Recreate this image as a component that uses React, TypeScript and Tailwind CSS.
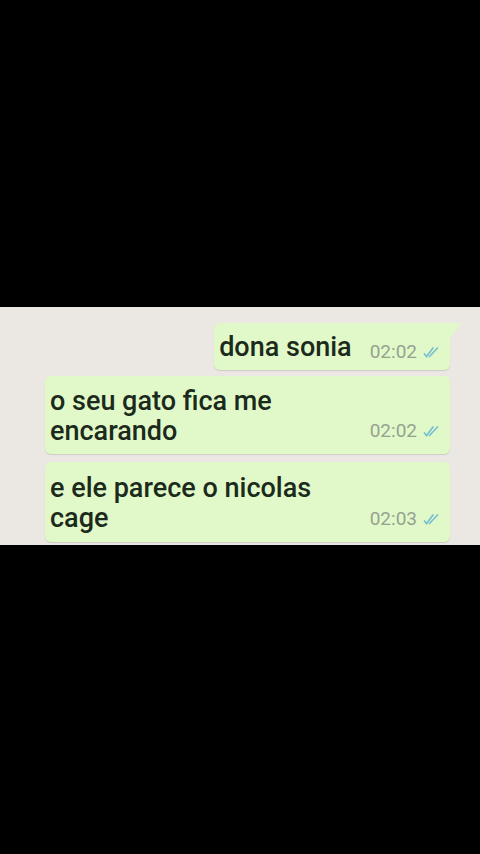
import React from "react";

const Ticks = () => (
  <svg width="18" height="12" viewBox="0 0 18 12" className="shrink-0">
    <path d="M1.5 8 L3.5 10.5 L10 2" fill="none" stroke="#79c0d2" strokeWidth="1.7" strokeLinecap="round" />
    <path d="M6.5 10.5 L14.5 2" fill="none" stroke="#79c0d2" strokeWidth="1.7" strokeLinecap="round" />
  </svg>
);

const Meta = ({ time }: { time: string }) => (
  <div className="flex items-center gap-[6px] shrink-0">
    <span className="text-[19px] text-[#96a290] leading-none">{time}</span>
    <Ticks />
  </div>
);

const App = () => {
  return (
    <div
      className="w-[480px] h-[854px] bg-black pt-[307px]"
      style={{ fontFamily: "Roboto, 'Noto Sans', sans-serif" }}
    >
      <div className="bg-[#ebe7e3] h-[238px] pt-[16px] flex flex-col">
        {/* bubble 1 */}
        <div className="flex justify-end pr-[30px]">
          <div className="relative bg-[#e1f9c8] rounded-l-[6px] rounded-br-[6px] h-[47px] pl-[5px] pr-[9px] flex items-end pb-[9px] gap-[18px] shadow-[0_1px_1px_rgba(0,0,0,0.12)]">
            <span className="text-[27px] font-medium text-[#1c2a1c] leading-none">dona sonia</span>
            <Meta time="02:02" />
            <svg width="13" height="18" viewBox="0 0 13 18" className="absolute -right-[12px] top-0">
              <path d="M0 0 L12 0 L0 17 Z" fill="#e1f9c8" />
            </svg>
          </div>
        </div>

        {/* bubble 2 */}
        <div className="mt-[6px] ml-[45px] w-[405px] h-[78px] bg-[#e1f9c8] rounded-[6px] pl-[5px] pr-[9px] flex justify-between items-end pb-[8px] shadow-[0_1px_1px_rgba(0,0,0,0.12)]">
          <p className="text-[27px] font-medium text-[#1c2a1c] leading-[30px]">
            o seu gato fica me
            <br />
            encarando
          </p>
          <div className="pb-[6px]">
            <Meta time="02:02" />
          </div>
        </div>

        {/* bubble 3 */}
        <div className="mt-[8px] ml-[45px] w-[405px] h-[80px] bg-[#e1f9c8] rounded-[6px] pl-[5px] pr-[9px] flex justify-between items-end pb-[9px] shadow-[0_1px_1px_rgba(0,0,0,0.12)]">
          <p className="text-[27px] font-medium text-[#1c2a1c] leading-[30px]">
            e ele parece o nicolas
            <br />
            cage
          </p>
          <div className="pb-[5px]">
            <Meta time="02:03" />
          </div>
        </div>
      </div>
    </div>
  );
};

export default App;
